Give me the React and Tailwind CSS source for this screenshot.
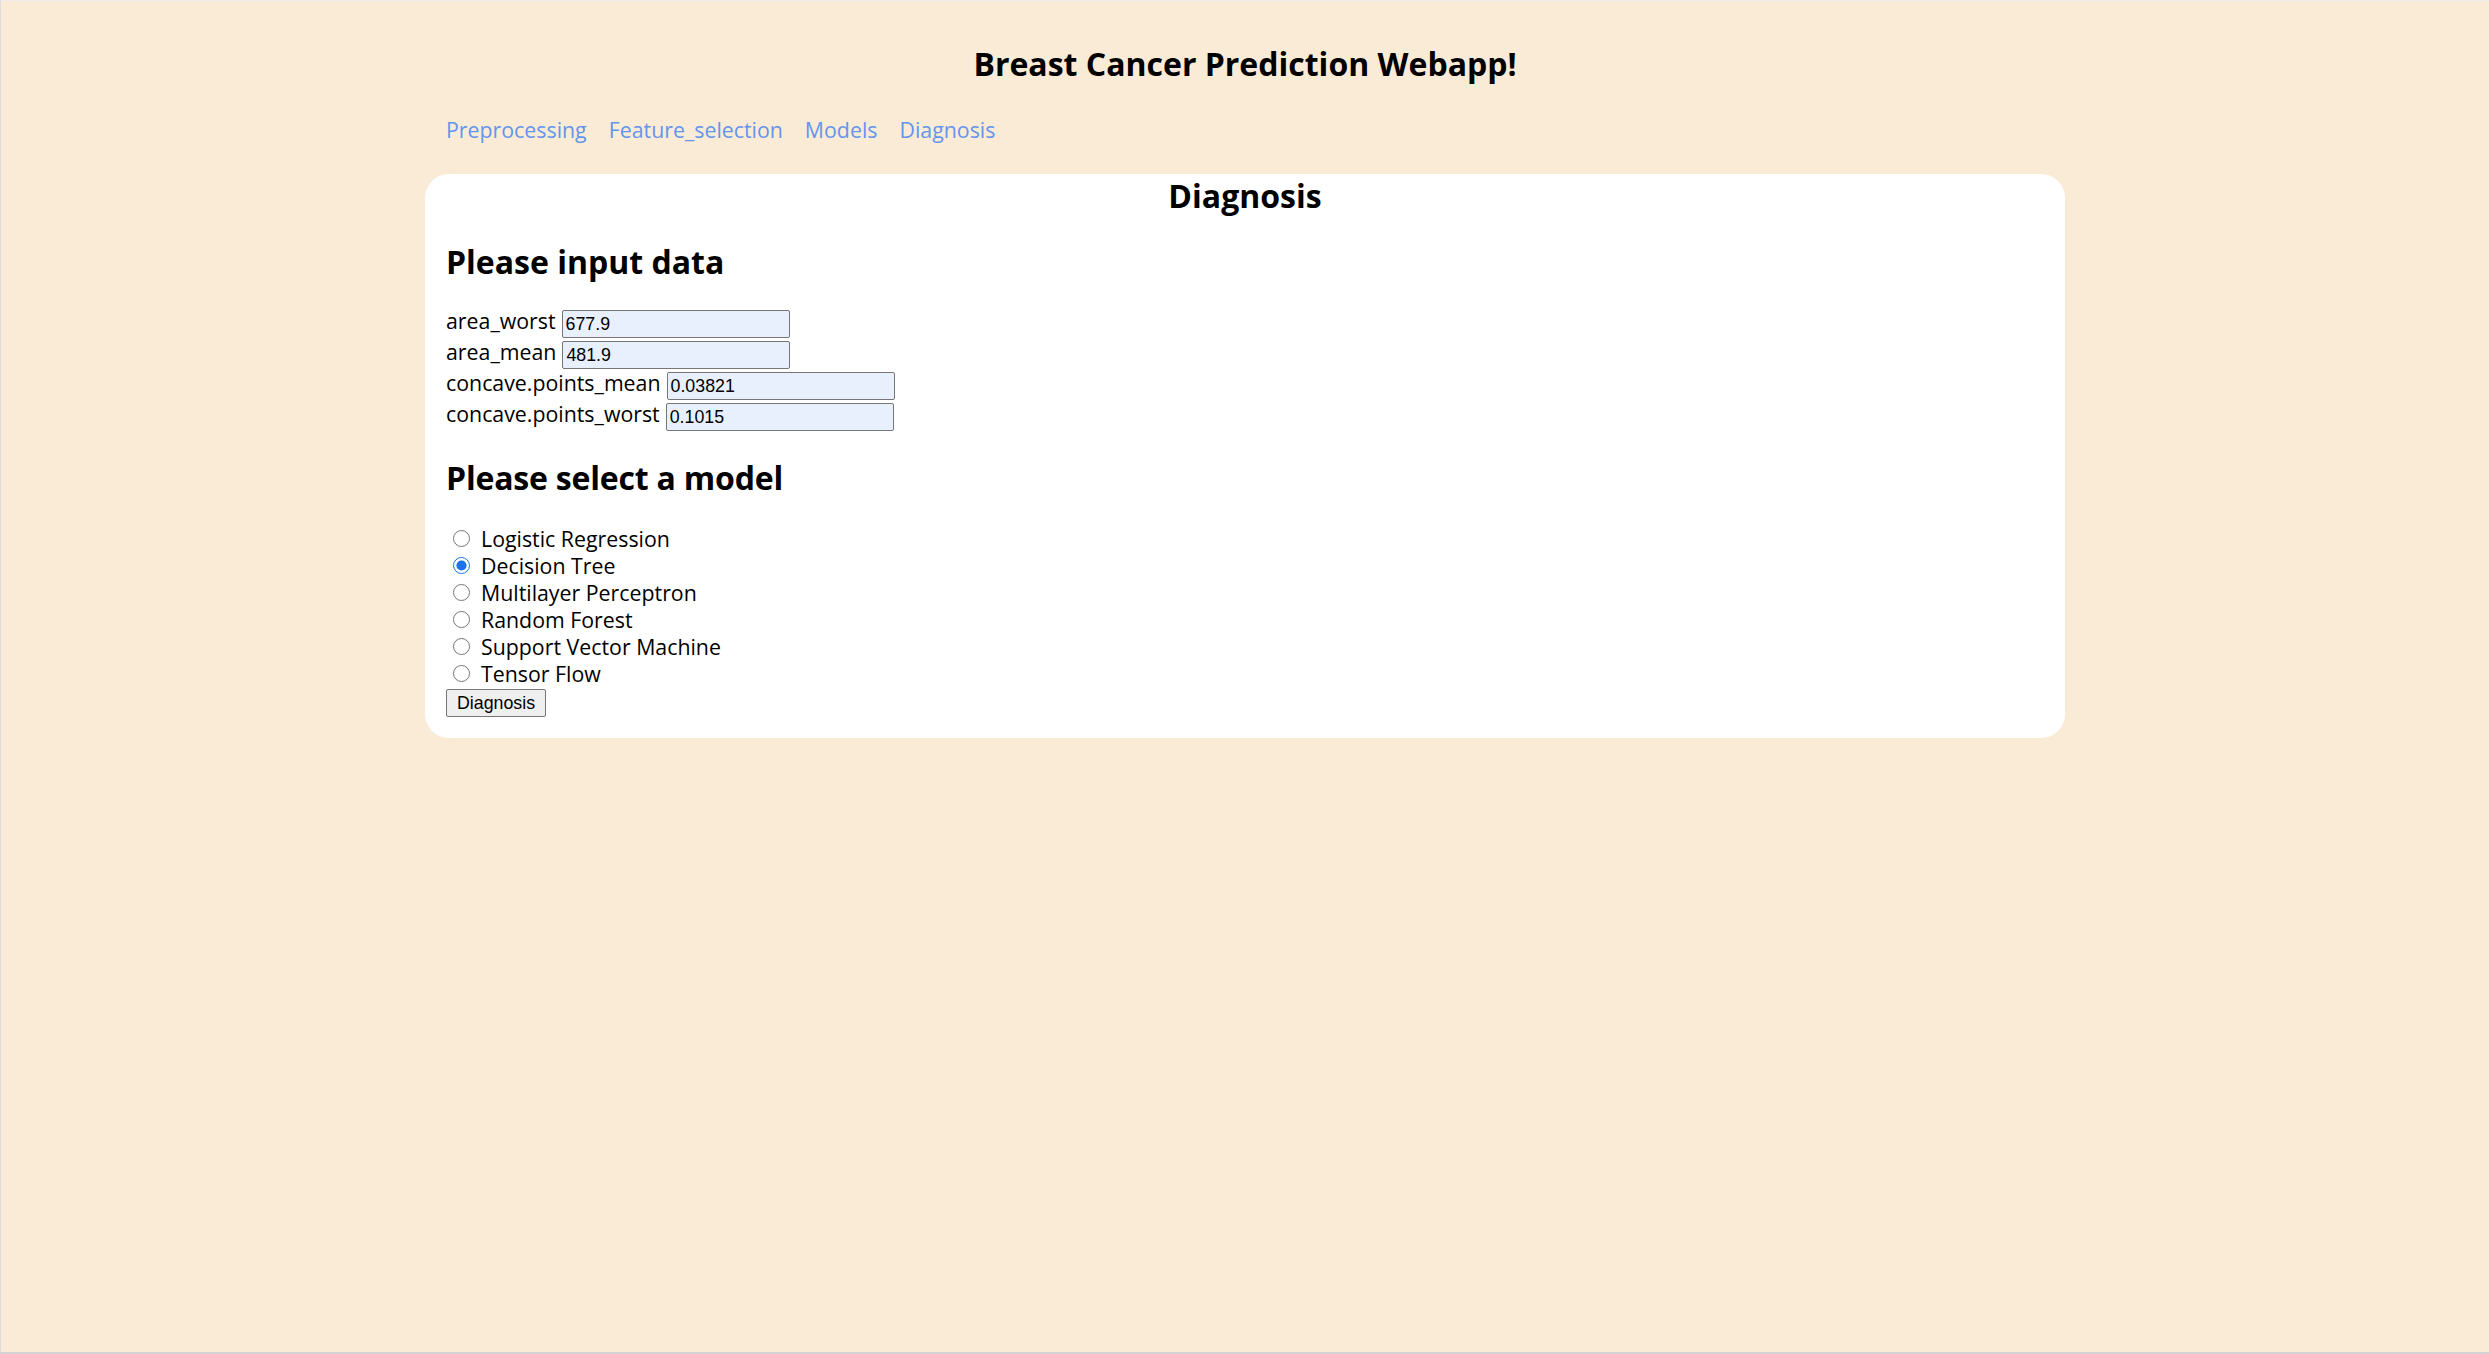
import React, { useState } from "react";

const FIELDS = [
  { name: "area_worst", value: "677.9" },
  { name: "area_mean", value: "481.9" },
  { name: "concave.points_mean", value: "0.03821" },
  { name: "concave.points_worst", value: "0.1015" },
];

const MODELS = [
  "Logistic Regression",
  "Decision Tree",
  "Multilayer Perceptron",
  "Random Forest",
  "Support Vector Machine",
  "Tensor Flow",
];

const NAV = ["Preprocessing", "Feature_selection", "Models", "Diagnosis"];

const App = () => {
  const [values, setValues] = useState(
    Object.fromEntries(FIELDS.map((f) => [f.name, f.value]))
  );
  const [model, setModel] = useState("Decision Tree");

  return (
    <div
      className="h-[1354px] box-border bg-[#faebd7] border-t border-t-[#ececec] border-l border-l-[#dcdcdc] border-b-2 border-b-[#d3d3d3] text-black"
      style={{ fontFamily: '"Open Sans", "Noto Sans", sans-serif' }}
    >
      {/* Header */}
      <h1 className="pt-[43px] text-center text-[32px] font-bold leading-[40px]">
        Breast Cancer Prediction Webapp!
      </h1>

      <div className="w-[1640px] mx-auto">
        {/* Nav links */}
        <nav className="mt-[32px] px-[21px] flex gap-[22px] text-[21.33px] leading-[27px]">
          {NAV.map((item) => (
            <a key={item} href="#" className="text-[#6495ed]">
              {item}
            </a>
          ))}
        </nav>

        {/* Card */}
        <div className="mt-[31px] bg-white rounded-[24px] px-[21px] pb-[21px]">
          <h2 className="pt-[2px] text-center text-[32px] font-bold leading-[40px]">Diagnosis</h2>

          <h3 className="mt-[26px] text-[32px] font-bold leading-[40px]">Please input data</h3>

          <div className="mt-[28px] flex flex-col gap-[3px]">
            {FIELDS.map((f) => (
              <div key={f.name} className="flex items-start h-[28px]">
                <label className="text-[21.33px] leading-[22px]">{f.name}</label>
                <input
                  type="text"
                  value={values[f.name]}
                  onChange={(e) => setValues({ ...values, [f.name]: e.target.value })}
                  className="ml-[6px] w-[228px] h-[28px] box-border border border-[#767676] rounded-[2px] bg-[#e8f0fe] px-[3px] text-[17.8px] text-black outline-none"
                  style={{ fontFamily: '"Liberation Sans", Arial, sans-serif' }}
                />
              </div>
            ))}
          </div>

          <h3 className="mt-[27px] text-[32px] font-bold leading-[40px] tracking-[-0.2px]">
            Please select a model
          </h3>

          <div className="mt-[27px] flex flex-col">
            {MODELS.map((m) => (
              <label key={m} className="flex items-center h-[27px] text-[21.33px] leading-[27px]">
                <input
                  type="radio"
                  name="model"
                  checked={model === m}
                  onChange={() => setModel(m)}
                  className="ml-[7px] mr-[11px] w-[17px] h-[17px] m-0 accent-[#1a73e8]"
                />
                {m}
              </label>
            ))}
          </div>

          <button
            type="button"
            className="mt-[2px] h-[28px] px-[10px] border border-[#767676] rounded-[2px] bg-[#efefef] text-[17.8px] leading-[20px] text-black"
            style={{ fontFamily: '"Liberation Sans", Arial, sans-serif' }}
          >
            Diagnosis
          </button>
        </div>
      </div>
    </div>
  );
};

export default App;
